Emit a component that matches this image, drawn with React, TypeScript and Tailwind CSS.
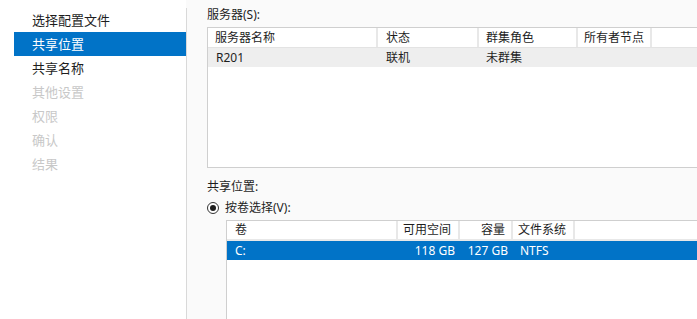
const steps = [
  { label: '选择配置文件', state: 'done' },
  { label: '共享位置', state: 'active' },
  { label: '共享名称', state: 'done' },
  { label: '其他设置', state: 'off' },
  { label: '权限', state: 'off' },
  { label: '确认', state: 'off' },
  { label: '结果', state: 'off' },
];

const font = { fontFamily: '"Noto Sans", "Noto Sans CJK SC", sans-serif' };

const App = () => {
  return (
    <div className="flex h-[319px] w-[697px] overflow-hidden bg-[#fafafa] text-[#1e1e1e]" style={font}>
      <aside className="w-[186px] shrink-0 bg-white pt-2 pl-[14px]">
        {steps.map((s) => (
          <div
            key={s.label}
            className={`flex h-6 items-center pl-[18px] pt-px text-[13px] ${
              s.state === 'active'
                ? 'bg-[#0173c7] text-white'
                : s.state === 'off'
                  ? 'text-[#c8c8c8]'
                  : 'text-[#1e1e1e]'
            }`}
          >
            {s.label}
          </div>
        ))}
      </aside>

      <div className="mt-2 w-px shrink-0 bg-[#d9d9d9]" />

      <main className="min-w-0 flex-1 overflow-hidden pl-5 text-xs">
        <p className="mt-[7px] h-5 leading-4">服务器(S):</p>

        <div className="h-[141px] w-[520px] border border-[#cfcfcf] bg-white">
          <div className="flex h-5 border-b border-[#e3e3e3]">
            <div className="flex w-[170px] items-center border-r-2 border-[#e8e8e8] pl-[7px]">服务器名称</div>
            <div className="flex w-[101px] items-center border-r-2 border-[#e8e8e8] pl-2">状态</div>
            <div className="flex w-[99px] items-center border-r-2 border-[#e8e8e8] pl-[7px]">群集角色</div>
            <div className="flex w-[74px] items-center border-r-2 border-[#e8e8e8] pl-[6px]">所有者节点</div>
          </div>
          <div className="flex h-[19px] bg-[#eeeeee]">
            <div className="flex w-[170px] items-center pl-2">R201</div>
            <div className="flex w-[101px] items-center pl-2">联机</div>
            <div className="flex w-[99px] items-center pl-[7px]">未群集</div>
          </div>
        </div>

        <p className="mt-[11px] h-[16px] leading-4">共享位置:</p>

        <label className="mt-[5px] flex h-[16px] items-center gap-[6px]">
          <span className="flex h-[12px] w-[12px] items-center justify-center rounded-full border border-[#333] bg-white">
            <span className="h-[6px] w-[6px] rounded-full bg-[#1e1e1e]" />
          </span>
          按卷选择(V):
        </label>

        <div className="mt-[4px] ml-[19px] h-[120px] w-[520px] border-t border-l border-[#cfcfcf] bg-white">
          <div className="flex h-5 border-b-2 border-[#e8e8e8]">
            <div className="flex w-[171px] items-center border-r-2 border-[#e8e8e8] pl-2">卷</div>
            <div className="flex w-[62px] items-center border-r-2 border-[#e8e8e8] pl-[5px]">可用空间</div>
            <div className="flex w-[53px] items-center justify-end border-r-2 border-[#e8e8e8] pr-[6px]">容量</div>
            <div className="flex w-[62px] items-center border-r-2 border-[#e8e8e8] pl-[5px]">文件系统</div>
          </div>
          <div className="flex h-[19px] bg-[#0173c7] text-white">
            <div className="flex w-[171px] items-center pl-2">C:</div>
            <div className="flex w-[62px] items-center justify-end pr-[5px]">118 GB</div>
            <div className="flex w-[53px] items-center justify-end pr-[5px]">127 GB</div>
            <div className="flex w-[62px] items-center pl-[7px]">NTFS</div>
          </div>
        </div>
      </main>
    </div>
  );
};

export default App;
